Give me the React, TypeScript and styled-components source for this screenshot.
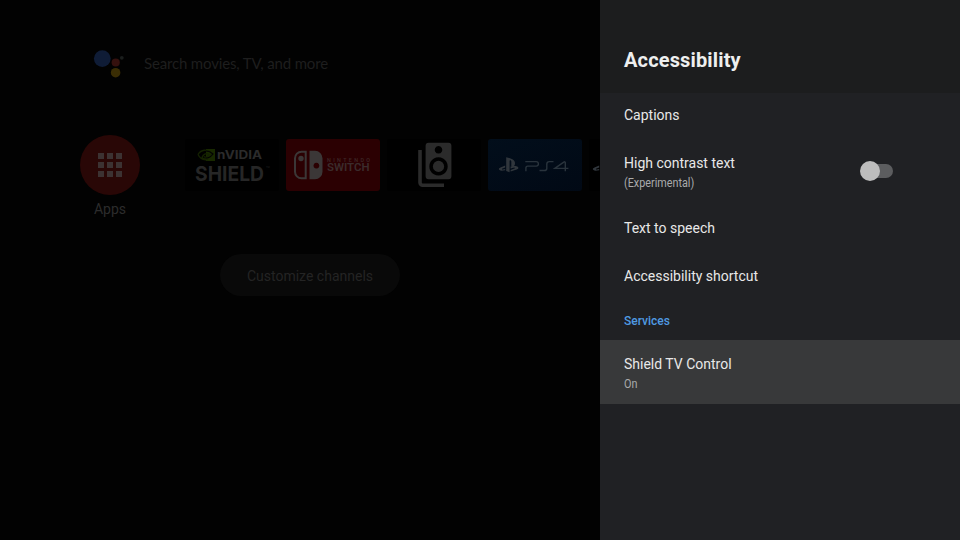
import React from 'react';
import styled, { createGlobalStyle } from 'styled-components';

const GlobalStyle = createGlobalStyle`
  * { box-sizing: border-box; }
  body { margin: 0; background: #020202; font-family: Roboto, "Liberation Sans", sans-serif; }
`;

const Screen = styled.div`
  display: flex;
  width: 960px;
  height: 540px;
  overflow: hidden;
  background: #020202;
`;

const Home = styled.main`
  width: 600px;
  height: 540px;
  overflow: hidden;
`;

const SearchBar = styled.div`
  display: flex;
  align-items: center;
  gap: 18px;
  height: 36px;
  margin: 46px 0 0 92px;
`;

const SearchHint = styled.span`
  padding-bottom: 2px;
  font: 400 15px/20px Lato, sans-serif;
  letter-spacing: -0.16px;
  color: #1e1e1e;
  white-space: nowrap;
`;

const AppsRow = styled.section`
  display: flex;
  align-items: flex-start;
  margin: 53px 0 0 80px;
`;

const AppsButton = styled.div`
  display: flex;
  flex-direction: column;
  align-items: center;
  width: 60px;
  flex: none;
`;

const AppsCircle = styled.div`
  display: grid;
  place-content: center;
  grid-template-columns: repeat(3, 6px);
  grid-auto-rows: 6px;
  gap: 3px;
  width: 60px;
  height: 60px;
  border-radius: 50%;
  background: #290706;
`;

const Dot = styled.i`
  background: #3c3232;
`;

const AppsLabel = styled.span`
  margin-top: 5px;
  font-size: 14px;
  line-height: 18px;
  color: #2c2c2c;
`;

const Cards = styled.div`
  display: flex;
  gap: 7px;
  margin: 4px 0 0 45px;
`;

const Card = styled.div<{ $bg: string }>`
  flex: none;
  width: 94px;
  height: 52px;
  border-radius: 3px;
  overflow: hidden;
  background: ${(p) => p.$bg};

  svg { display: block; }
`;

const Customize = styled.div`
  display: flex;
  align-items: center;
  justify-content: center;
  width: 180px;
  height: 42px;
  margin: 36px 0 0 220px;
  padding-top: 1px;
  border-radius: 21px;
  background: #090909;
  color: #242424;
  font-size: 14px;
`;

const Panel = styled.aside`
  width: 360px;
  height: 540px;
  background: #202124;
`;

const PanelHeader = styled.header`
  display: flex;
  align-items: center;
  height: 93px;
  padding: 26px 24px 0;
  background: #1c1d1e;
`;

const PanelTitle = styled.h1`
  margin: 0;
  font-size: 20px;
  line-height: 24px;
  font-weight: 700;
  letter-spacing: 0.15px;
  color: #eeefef;
`;

const List = styled.div`
  display: flex;
  flex-direction: column;
`;

const Row = styled.div<{ $size?: 'first' | 'tall'; $selected?: boolean }>`
  display: flex;
  align-items: center;
  justify-content: space-between;
  height: ${(p) => (p.$size === 'tall' ? 64 : p.$size === 'first' ? 47 : 48)}px;
  padding: 0 67px 0 24px;
  ${(p) => p.$size === 'first' && 'padding-bottom: 3px;'}
  ${(p) => p.$selected && 'padding-top: 2px; background: #38393a;'}
`;

const Labels = styled.div`
  display: flex;
  flex-direction: column;
  align-items: flex-start;
  gap: 3px;
  padding-top: 1px;
`;

const Title = styled.span`
  font-size: 14px;
  line-height: 18px;
  color: #e8e8e8;
`;

const Summary = styled.span`
  font-size: 12px;
  line-height: 16px;
  color: #aaabac;
  transform: scaleX(0.9);
  transform-origin: left;
`;

const SectionTitle = styled.div`
  display: flex;
  align-items: center;
  height: 40px;
  padding: 2px 24px 0;
  font-size: 12px;
  font-weight: 500;
  color: #4f9ae3;
`;

const Switch = styled.div`
  display: flex;
  align-items: center;
  width: 32px;
  height: 14px;
  margin-bottom: 2px;
  border-radius: 7px;
  background: #5c5d5f;
`;

const Thumb = styled.div`
  flex: none;
  width: 20px;
  height: 20px;
  margin-left: -0.6px;
  border-radius: 50%;
  background: #bdbdbd;
`;

const AssistantIcon = () => (
  <svg width="34" height="36" viewBox="92 46 34 36">
    <circle cx="102.3" cy="58.6" r="8.4" fill="#0f1c36" />
    <circle cx="115.7" cy="62.5" r="4.1" fill="#35110e" />
    <circle cx="121.8" cy="57.8" r="1.9" fill="#1b1e1d" />
    <circle cx="115.6" cy="72.7" r="4.8" fill="#3a2d04" />
  </svg>
);

const ShieldLogo = () => (
  <svg width="94" height="52" viewBox="0 0 94 52">
    <path d="M21 10h9v12h-9z" fill="#182900" />
    <path
      d="M13 15.5c3-5 9-6 14-1-3 5-7 7-10 4 1-3 4-5 7-3-2 3-4 3-5 2M13 15.5c2 4 6 6 10 5"
      fill="none" stroke="#142200" strokeWidth="1.3"
    />
    <path d="M21 12c4 0 6 2 7 3-2 3-4 4-7 4" fill="none" stroke="#030303" strokeWidth="1.1" />
    <text x="32" y="20" fontFamily="Inter, sans-serif" fontWeight="700" fontSize="11.5" fill="#2b2b2b" textLength="45" lengthAdjust="spacingAndGlyphs">nVIDIA</text>
    <text x="10" y="42" fontFamily="Inter, sans-serif" fontWeight="700" fontSize="20.5" fill="#262626" textLength="69" lengthAdjust="spacingAndGlyphs">SHIELD</text>
    <text x="81" y="29" fontFamily="Inter, sans-serif" fontSize="2.4" fill="#222">TM</text>
  </svg>
);

const SwitchLogo = () => (
  <svg width="94" height="52" viewBox="0 0 94 52">
    <path d="M19.7 12.7h-4.2a6.5 6.5 0 0 0-6.5 6.5v13.6a6.5 6.5 0 0 0 6.5 6.5h4.2z" fill="none" stroke="#3b3737" strokeWidth="2" />
    <circle cx="15" cy="19.5" r="2.7" fill="#3b3737" />
    <path
      fillRule="evenodd"
      d="M23.5 11.7h5.5a7.5 7.5 0 0 1 7.5 7.5v13.6a7.5 7.5 0 0 1-7.5 7.5h-5.5zM30.4 23.8a2.9 2.9 0 1 0 .01 0z"
      fill="#3b3737"
    />
    <text x="41" y="22.9" fontFamily="Roboto, sans-serif" fontWeight="500" fontSize="5.4" fill="#3f2828" textLength="43">NINTENDO</text>
    <text x="41" y="32.4" fontFamily="Roboto, sans-serif" fontWeight="600" fontSize="10" fill="#3b2c2c" textLength="42.5" lengthAdjust="spacingAndGlyphs">SWITCH</text>
  </svg>
);

const SpeakerIcon = () => (
  <svg width="94" height="52" viewBox="0 0 94 52">
    <path d="M33 11v32.5a2.7 2.7 0 0 0 2.7 2.7H57" fill="none" stroke="#2b2b2b" strokeWidth="3.6" />
    <path
      fillRule="evenodd"
      d="M41.6 3.7h19.8a3 3 0 0 1 3 3v30.6a3 3 0 0 1-3 3H41.6a3 3 0 0 1-3-3V6.7a3 3 0 0 1 3-3zM51.5 7a3.8 3.8 0 1 0 .01 0zM51.5 18.2a9.2 9.2 0 1 0 .01 0z"
      fill="#2b2b2b"
    />
    <circle cx="51.5" cy="27.4" r="5.6" fill="#2b2b2b" />
  </svg>
);

const PlayStationMark = () => (
  <>
    <path d="M18.2 18.3v13.8l3.4 1.2V21.8c0-1.1 1.7-.8 1.7.5v4.7c2.4 1.2 3.7-.1 3.7-2.9 0-3.9-4.6-4.9-8.8-5.8z" fill="#30363c" />
    <path d="M17.2 26.5l-4.7 1.9c-2.8 1.2-1.9 3 1.1 3.4l3.6-.5v-1.2c-2.8.9-4.3.2-2.6-.6l2.6-1zM22.6 27.5c3.8-1 7.8-.4 7.8 1.4 0 1.3-3.2 2-7.8 3.6v-1.6l3.7-1.3c1.9-.7.2-1.3-1.9-.7l-1.8.5z" fill="#30363c" />
  </>
);

const Ps4Logo = () => (
  <svg width="94" height="52" viewBox="0 0 94 52">
    <PlayStationMark />
    <path
      d="M37.3 22.6h10.9c1.6 0 2.2.8 2.2 2.2s-.6 2.3-2.2 2.3h-8.4c-1.3 0-1.9.6-1.9 1.9v3.2M65.5 22.6h-4.2c-1.7 0-2.5.8-2.5 2.4v4.4c0 1.4-.8 2.1-2.5 2.1h-4.8M77.3 32.2v-8.6c0-.9-.8-1-1.5-.5l-9 6.3h13.6"
      fill="none" stroke="#29333c" strokeWidth="1.4"
    />
  </svg>
);

const ClippedPsLogo = () => (
  <svg width="94" height="52" viewBox="0 0 94 52">
    <g transform="translate(-7 0)"><PlayStationMark /></g>
  </svg>
);

export default function App() {
  return (
    <>
      <GlobalStyle />
      <Screen>
        <Home>
          <SearchBar>
            <AssistantIcon />
            <SearchHint>Search movies, TV, and more</SearchHint>
          </SearchBar>
          <AppsRow>
            <AppsButton>
              <AppsCircle>
                {Array.from({ length: 9 }, (_, i) => <Dot key={i} />)}
              </AppsCircle>
              <AppsLabel>Apps</AppsLabel>
            </AppsButton>
            <Cards>
              <Card $bg="#000"><ShieldLogo /></Card>
              <Card $bg="#2b0002"><SwitchLogo /></Card>
              <Card $bg="#000"><SpeakerIcon /></Card>
              <Card $bg="linear-gradient(160deg, #020e1b, #010915)"><Ps4Logo /></Card>
              <Card $bg="#000"><ClippedPsLogo /></Card>
            </Cards>
          </AppsRow>
          <Customize>Customize channels</Customize>
        </Home>
        <Panel>
          <PanelHeader><PanelTitle>Accessibility</PanelTitle></PanelHeader>
          <List>
            <Row $size="first"><Title>Captions</Title></Row>
            <Row $size="tall">
              <Labels>
                <Title>High contrast text</Title>
                <Summary>(Experimental)</Summary>
              </Labels>
              <Switch><Thumb /></Switch>
            </Row>
            <Row><Title>Text to speech</Title></Row>
            <Row><Title>Accessibility shortcut</Title></Row>
            <SectionTitle>Services</SectionTitle>
            <Row $size="tall" $selected>
              <Labels>
                <Title>Shield TV Control</Title>
                <Summary>On</Summary>
              </Labels>
            </Row>
          </List>
        </Panel>
      </Screen>
    </>
  );
}
